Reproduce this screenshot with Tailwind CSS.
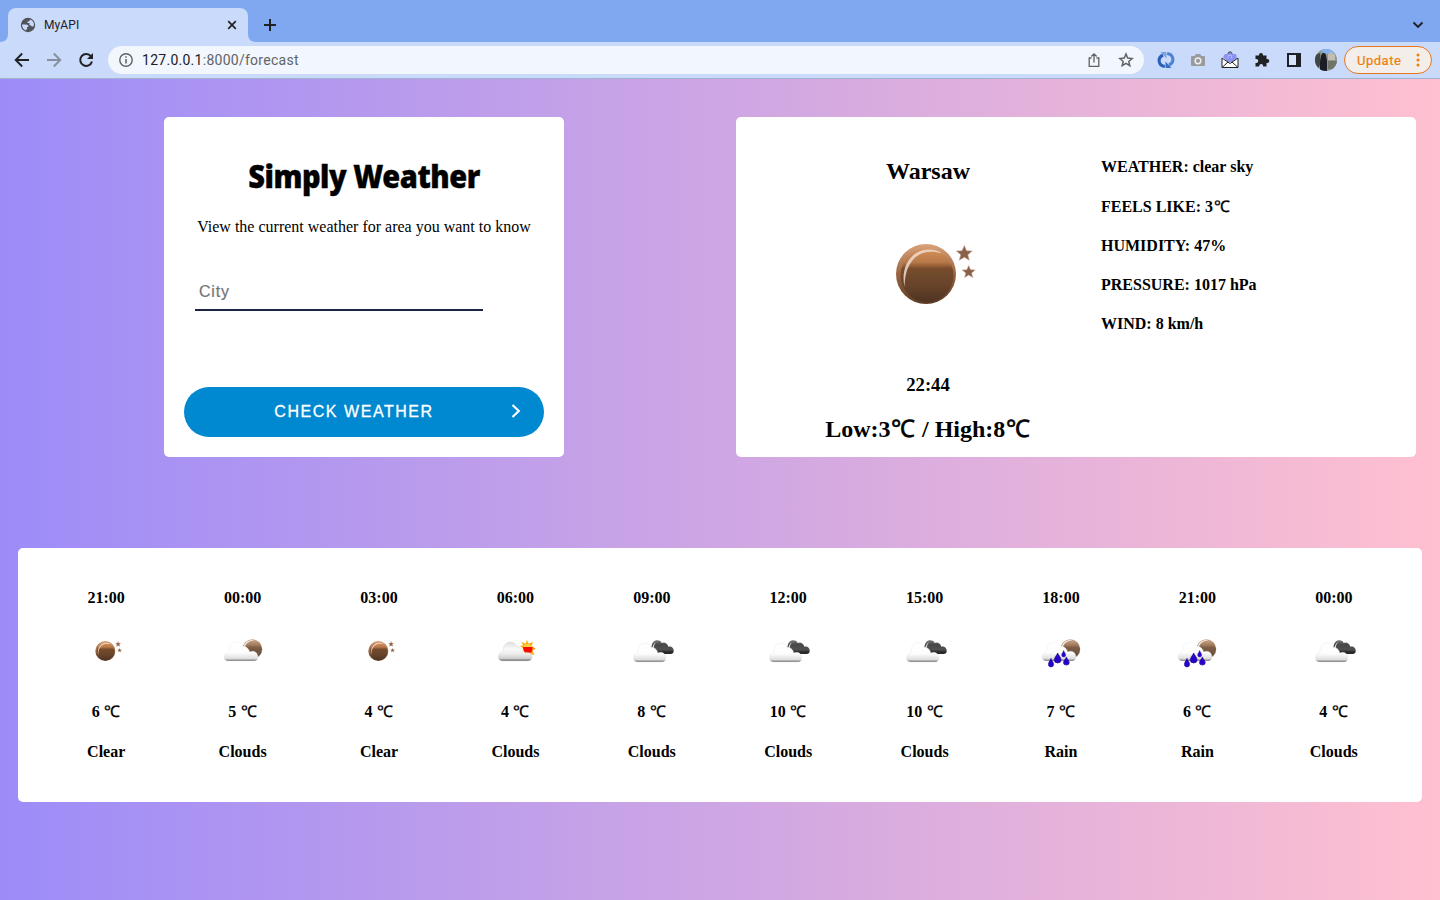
<!DOCTYPE html>
<html lang="en">
<head>
<meta charset="utf-8">
<title>MyAPI</title>
<script src="https://cdn.jsdelivr.net/npm/@tailwindcss/browser@4"></script>
</head>
<body class="w-[1440px] h-[900px] overflow-hidden flex flex-col text-black font-['Liberation_Serif',serif]">
<!-- weather icon library -->
<svg width="0" height="0" class="absolute" aria-hidden="true">
  <defs>
    <linearGradient id="gm" x1="0" y1="0" x2="0" y2="1"><stop offset="0" stop-color="#d88f58"/><stop offset=".16" stop-color="#c0814f"/><stop offset=".25" stop-color="#b87848"/><stop offset=".37" stop-color="#774c2d"/><stop offset=".7" stop-color="#66432a"/><stop offset="1" stop-color="#4f3422"/></linearGradient>
    <linearGradient id="gr" x1="0" y1="0" x2="0" y2="1"><stop offset="0" stop-color="#dba27a"/><stop offset=".5" stop-color="#9a6540"/><stop offset="1" stop-color="#5a3b25"/></linearGradient>
    <linearGradient id="gc" x1="0" y1="48" x2="0" y2="106" gradientUnits="userSpaceOnUse"><stop offset="0" stop-color="#fff"/><stop offset=".55" stop-color="#fdfdfd"/><stop offset=".85" stop-color="#e0e0e0"/><stop offset=".92" stop-color="#a8a8a8"/><stop offset="1" stop-color="#626262"/></linearGradient>
    <linearGradient id="gs" x1="0" y1="48" x2="0" y2="106" gradientUnits="userSpaceOnUse"><stop offset="0" stop-color="#dedede"/><stop offset=".35" stop-color="#f8f8f8"/><stop offset=".6" stop-color="#eee"/><stop offset=".85" stop-color="#cfcfcf"/><stop offset=".92" stop-color="#8f8f8f"/><stop offset="1" stop-color="#7a7a7a"/></linearGradient>
    <linearGradient id="gd" x1="0" y1="43" x2="0" y2="86" gradientUnits="userSpaceOnUse"><stop offset="0" stop-color="#777"/><stop offset=".3" stop-color="#484848"/><stop offset=".65" stop-color="#505050"/><stop offset=".8" stop-color="#2c2c2c"/><stop offset="1" stop-color="#222"/></linearGradient>
    <linearGradient id="gh" x1="0" y1="0" x2="0" y2="1"><stop offset="0" stop-color="#cfa88c"/><stop offset=".3" stop-color="#a07a5c"/><stop offset=".42" stop-color="#7d5d44"/><stop offset="1" stop-color="#634b39"/></linearGradient>
    <path id="cloud" d="M32 105C22 105 18 99 18 92C18 85 23 79 30 78C31 75 31 73 33 71C33 57 42 48 54 48C64 48 70 53 73 61C82 60 92 66 95 78C105 73 117 78 118 86C122 91 121 105 108 105Z"/>
    <path id="drop" d="M0 -13C2 -7 8 -1 8 5A8 8 0 0 1 -8 5C-8 -1 -2 -7 0 -13Z" fill="#2a00d0" stroke="#1a0c78" stroke-width="1.5"/>
    <path id="star" d="M0 -8L2.3 -2.8L8 -2.5L3.6 1.2L5 6.8L0 3.8L-5 6.8L-3.6 1.2L-8 -2.5L-2.3 -2.8Z" fill="#8a6048" stroke="#c9ab98" stroke-width=".6"/>
    <g id="ball"><circle r="30" fill="url(#gr)"/><circle cx="1" cy="1.500" r="26.500" fill="url(#gm)"/><path d="M-21.500 13C-26 -8 -14 -24 2 -24.500C8 -24.500 13 -23 16 -20.500C4 -24 -7 -22 -14 -13C-20 -5 -21 3 -21.500 13Z" fill="#efdccf" opacity=".85"/></g>
    <g id="hazy"><circle r="29.500" fill="url(#gh)"/><path d="M-27 -4C-24 -22 -8 -29 6 -27C-8 -26 -19 -18 -24 -4Z" fill="#f6ece6"/></g>
  </defs>
  <symbol id="clear" viewBox="0 0 150 150"><use href="#ball" x="73" y="75"/><use href="#star" x="111.300" y="54.500"/><use href="#star" transform="translate(115.700 73) scale(.82)"/></symbol>
  <symbol id="few" viewBox="0 0 150 150"><use href="#hazy" x="103" y="69.500"/><use href="#cloud" fill="url(#gc)" stroke="#e3e3e3" stroke-width="1"/></symbol>
  <symbol id="sun" viewBox="0 0 150 150"><path d="M110.500 42L116 53L129 47L125 59L138 69L127 73L133 87L119 84L102 80L98 66L90 60L99 58L95 47L107 53Z" fill="#ffa90f"/><circle cx="113" cy="68" r="15" fill="#ffcf3a"/><path d="M99 63L127 63C129 77 123 82 113 82C103 80 99 73 99 63Z" fill="#f80a00"/><path d="M32 105C22 105 18 99 18 92C18 85 23 79 30 78C31 75 31 73 33 71C33 57 42 48 54 48C64 48 70 53 73 61C80 60 86 65 89 74C94 76 96 79 99 81C108 78 117 81 118 87C121 92 119 105 108 105Z" transform="translate(7 0)" fill="url(#gs)" stroke="#d2d2d2" stroke-width="1"/></symbol>
  <symbol id="broken" viewBox="0 0 150 150"><path d="M73 65C75 48 83 43 91 43C98 43 102 46 104 51C111 46 122 52 124 62C133 60 141 67 140 75C140 82 136 84 131 84H94Z" fill="url(#gd)"/><path d="M76 65C78 53 85 47 94 47C83 49 81 57 81 66Z" fill="#ddd"/><use href="#cloud" y="3" transform="translate(2 0) scale(.955 1)" fill="url(#gc)" stroke="#dedede" stroke-width="1"/></symbol>
  <symbol id="rain" viewBox="0 0 150 150"><use href="#hazy" x="103" y="69.500"/><use href="#cloud" fill="url(#gc)" stroke="#e3e3e3" stroke-width="1"/><use href="#drop" x="45" y="110"/><use href="#drop" transform="translate(65 96) scale(1.300 1.150)"/><use href="#drop" transform="translate(83 83) scale(.75)"/><use href="#drop" transform="translate(91 105) scale(1.100 .95)"/></symbol>
</svg>

<header class="shrink-0 h-[79px] flex flex-col bg-[#c9dafa] border-b border-[#9fb3cf] font-[Roboto,sans-serif]">
  <div class="h-[42px] bg-[#80a8f1] flex items-end justify-between">
    <div class="flex items-end">
      <svg class="w-2 h-[34px]" viewBox="0 0 8 34"><path d="M8 26V34H0C5 34 8 31 8 26Z" fill="#c9dafa"/></svg>
      <div class="w-60 h-[34px] rounded-t-lg bg-[#c9dafa] flex items-center pl-3 pr-[9px]">
        <svg class="size-4" viewBox="0 0 16 16"><circle cx="8" cy="8" r="7.200" fill="#50545a"/><path d="M2 7.500H6C8 7.500 8.500 8.500 8.300 10H7V12L5.800 13.300C3.500 12.500 2 10.500 2 7.500ZM10 2.500C9.800 4 9 4.500 7.500 4.500V6H9.500V8C11 8 11 9.500 12.500 9.500L13.700 9.200C14.500 6 13 3.500 10 2.500Z" fill="#c9dafa"/></svg>
        <span class="ml-2 flex-1 text-xs text-[#202124] tracking-[0.1px]">MyAPI</span>
        <svg class="size-[14px]" viewBox="0 0 14 14" fill="none" stroke="#202124" stroke-width="1.700"><path d="M3.200 3.200L10.800 10.800M10.800 3.200L3.200 10.800"/></svg>
      </div>
      <svg class="w-2 h-[34px]" viewBox="0 0 8 34"><path d="M0 26V34H8C3 34 0 31 0 26Z" fill="#c9dafa"/></svg>
      <div class="h-[34px] flex items-center pl-[6px]"><svg class="size-4" viewBox="0 0 16 16" stroke="#202124" stroke-width="2"><path d="M8 2V14M2 8H14"/></svg></div>
    </div>
    <div class="h-[34px] flex items-center pr-4"><svg class="size-3" viewBox="0 0 12 12" fill="none" stroke="#202124" stroke-width="1.900"><path d="M1.500 3.500L6 8L10.500 3.500"/></svg></div>
  </div>
  <div class="h-9 flex items-center pl-[14px] pr-2">
    <svg class="size-4" viewBox="0 0 16 16" fill="none" stroke="#202124" stroke-width="1.900"><path d="M15 8H2.500M8.200 1.500L1.700 8L8.200 14.500"/></svg>
    <svg class="size-4 ml-4" viewBox="0 0 16 16" fill="none" stroke="#858f9f" stroke-width="1.900"><path d="M1 8H13.500M7.800 1.500L14.300 8L7.800 14.500"/></svg>
    <svg class="size-4 ml-4" viewBox="0 0 16 16"><path d="M13 4.300A6 6 0 1 0 14 9.500" fill="none" stroke="#202124" stroke-width="2"/><path d="M15 1V7H9Z" fill="#202124"/></svg>
    <div class="ml-[14px] w-[1036px] h-7 rounded-full bg-[#f2f6fd] flex items-center pl-[11px] pr-[10px]">
      <svg class="size-[14px]" viewBox="0 0 14 14"><circle cx="7" cy="7" r="6.200" fill="none" stroke="#5f6368" stroke-width="1.400"/><path d="M7 3.300V4.800M7 6V10.500" stroke="#5f6368" stroke-width="1.500"/></svg>
      <span class="ml-[9px] flex-1 text-sm tracking-[0.27px] text-[#606367]"><span class="text-[#202124]">127.0.0.1</span>:8000/forecast</span>
      <svg class="size-4" viewBox="0 0 16 16" fill="none" stroke="#5f6368" stroke-width="1.300"><path d="M5.500 6H3.200V14.300H12.800V6H10.500M8 10.500V2M5.300 4.500L8 1.800L10.700 4.500"/></svg>
      <svg class="size-4 ml-4" viewBox="0 0 16 16" fill="none" stroke="#5f6368" stroke-width="1.500"><path d="M8 2L9.700 6.100L14.100 6.500L10.800 9.400L11.800 13.700L8 11.400L4.200 13.700L5.200 9.400L1.900 6.500L6.300 6.100Z"/></svg>
    </div>
    <svg class="size-[18px] ml-[13px]" viewBox="0 0 18 18" fill="none" stroke-width="3"><path d="M7.800 15.500C1 14.500 .2 6.500 6 4" stroke="#2b5fb8"/><path d="M10.200 2.500C17 3.500 17.800 11.500 12 14" stroke="#4f83d0"/><path d="M3.500 1H9.500V7.500Z" fill="#7aa5e2"/><path d="M14.500 17H8.500V10.500Z" fill="#3a6fc4"/></svg>
    <svg class="size-4 ml-[15px]" viewBox="0 0 16 16"><path d="M2 4H4.500L6 2H10L11.500 4H14Q15 4 15 5V13Q15 14 14 14H2Q1 14 1 13V5Q1 4 2 4Z" fill="#999a9c"/><circle cx="8" cy="8.800" r="3.600" fill="#eee"/><circle cx="8" cy="8.800" r="2.100" fill="#999"/></svg>
    <svg class="size-[18px] ml-[15px]" viewBox="0 0 18 18"><path d="M1 7L9 1L17 7V17H1Z" fill="#fff"/><path d="M2 6L4 3H6L9 1L12 3H15L16 7L11 11H7Z" fill="#8a91f4"/><path d="M1 7V16.500H17V7M1 7L9 12.500L17 7M1 16.500L7 11M17 16.500L11 11M7 2.500C7 .5 11 .5 11 2.500" fill="none" stroke="#222" stroke-width="1"/><path d="M7 8V4.500H10.500V7.500" fill="none" stroke="#b3b8ff"/></svg>
    <svg class="size-4 ml-[15px]" viewBox="0 0 16 16" fill="#202124"><path d="M1.500 3.500H5V3A2 2 0 0 1 9 3V3.500H12.500V7H13.300A2 2 0 0 1 13.300 11H12.500V14.500H9.200V14A2 2 0 0 0 5.200 14V14.500H1.500V11H2.300A2 2 0 0 0 2.300 7H1.500Z"/></svg>
    <svg class="size-[14px] ml-[17px]" viewBox="0 0 14 14"><path d="M0 0H14V14H0Z" fill="#202124"/><path d="M2 2H9V12H2Z" fill="#d6e3fb"/></svg>
    <svg class="size-[22px] ml-[14px]" viewBox="0 0 22 22"><clipPath id="av"><circle cx="11" cy="11" r="11"/></clipPath><g clip-path="url(#av)"><path fill="#8d9691" d="M0 0H22V22H0Z"/><path fill="#83b4ee" d="M5 0H22V6L17 4L12 5L7 3Z"/><path fill="#c3bcb0" d="M13 5L16 3L20 6V11H13Z"/><path fill="#3f4740" d="M0 6L5 4L6 14L3 20H0Z"/><path fill="#6f7466" d="M13 12H22V20H13Z"/><path fill="#1c1d25" d="M6 8C6 3 11 3 11 7L12 11V22H5L5 13Z"/></g></svg>
    <div class="ml-[7px] w-[88px] h-7 rounded-full border border-[#e8761b] bg-[#f3eee9] flex items-center pl-3 pr-[11px] justify-between">
      <span class="text-[13px] pt-px tracking-[0.5px] text-[#ee7d09] [-webkit-text-stroke:0.2px_#ee7d09]">Update</span>
      <svg class="w-1 h-[14px]" viewBox="0 0 4 14" fill="#ee7d09"><circle cx="2" cy="2" r="1.500"/><circle cx="2" cy="7" r="1.500"/><circle cx="2" cy="12" r="1.500"/></svg>
    </div>
  </div>
</header>

<main class="flex-1 bg-linear-to-r/srgb from-[#9d8cf8] to-[#ffc0d0] px-[18px] pt-[38px]">
  <div class="flex pl-[146px] pr-[6px] justify-between">
    <section class="w-[400px] h-[340px] bg-white rounded-[5px] px-5 pb-5 flex flex-col">
      <h1 class="mt-9 h-[46px] leading-[46px] text-center text-[32px] font-black tracking-[-0.5px] scale-x-[.905] [-webkit-text-stroke:0.4px] whitespace-nowrap font-['Noto_Sans',sans-serif]">Simply Weather</h1>
      <p class="mt-[18px] h-5 leading-5 text-center text-base">View the current weather for area you want to know</p>
      <div class="mt-[37px] ml-[11px] w-72 h-[37px] border-b-2 border-[#1b2440] pl-1 leading-9 text-base tracking-[0.8px] text-[#757575] [-webkit-text-stroke:0.2px] font-['Liberation_Sans',sans-serif]">City</div>
      <div class="mt-auto h-[50px] rounded-full bg-[#0088d1] flex items-center text-white font-['Liberation_Sans',sans-serif]">
        <span class="w-[340px] text-center text-base tracking-[1.55px] [-webkit-text-stroke:0.3px]">CHECK WEATHER</span>
        <svg class="-ml-[16px] -mt-0.5 w-4 h-4" viewBox="0 0 16 16" fill="none" stroke="#fff" stroke-width="2.200"><path d="M4.500 2L10.800 8L4.500 14"/></svg>
      </div>
    </section>
    <section class="w-[680px] h-[340px] bg-white rounded-[5px] px-5 flex font-bold">
      <div class="w-[344px] flex flex-col items-center">
        <h2 class="mt-10 h-7 leading-7 text-2xl">Warsaw</h2>
        <svg class="mt-[14px] size-[150px] shrink-0"><use href="#clear"/></svg>
        <h3 class="mt-[25px] h-[22px] leading-[22px] text-[18.720px]">22:44</h3>
        <h2 class="mt-[19px] h-7 leading-7 text-2xl whitespace-nowrap">Low:3<span class="font-normal mx-[0.03em] [-webkit-text-stroke:0.6px]">℃</span> / High:8<span class="font-normal mx-[0.03em] [-webkit-text-stroke:0.6px]">℃</span></h2>
      </div>
      <div class="ml-px mt-10 flex flex-col gap-[19px] text-base leading-5 whitespace-nowrap">
        <p class="h-5 mb-px">WEATHER: clear sky</p><p class="h-5">FEELS LIKE: 3<span class="font-normal mx-[0.03em] [-webkit-text-stroke:0.3px]">℃</span></p><p class="h-5">HUMIDITY: 47%</p><p class="h-5">PRESSURE: 1017 hPa</p><p class="h-5">WIND: 8 km/h</p>
      </div>
    </section>
  </div>
  <section id="hours" class="mt-[91px] h-[254px] bg-white rounded-[5px] px-5 grid grid-cols-10 font-bold text-base"></section>
</main>
<script>
const hours = [
  ["21:00","clear",6,"Clear"],["00:00","few",5,"Clouds"],["03:00","clear",4,"Clear"],["06:00","sun",4,"Clouds"],["09:00","broken",8,"Clouds"],
  ["12:00","broken",10,"Clouds"],["15:00","broken",10,"Clouds"],["18:00","rain",7,"Rain"],["21:00","rain",6,"Rain"],["00:00","broken",4,"Clouds"]];
document.getElementById("hours").innerHTML = hours.map(([t,i,d,w]) => `
  <div class="flex flex-col items-center pt-10">
    <p class="h-5 leading-5">${t}</p>
    <svg class="mt-[18px] size-[50px] shrink-0"><use href="#${i}"/></svg>
    <p class="mt-[26px] h-5 leading-5">${d} <span class="font-normal mx-[0.03em] [-webkit-text-stroke:0.3px]">℃</span></p>
    <p class="mt-5 h-5 leading-5">${w}</p>
  </div>`).join("");
</script>
</body>
</html>
